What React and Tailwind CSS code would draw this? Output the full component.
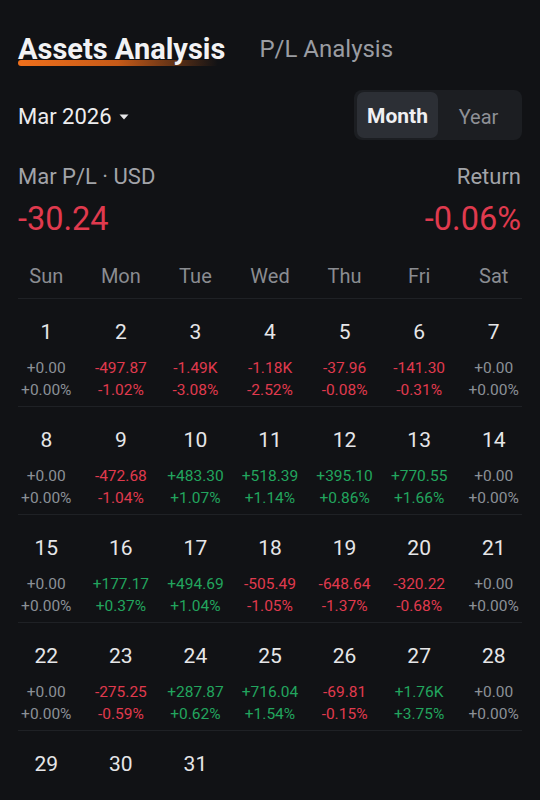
import React from "react";

const RED = "text-[#e03a4e]";
const GREEN = "text-[#22a55e]";
const FLAT = "text-[#8b9097]";

const days = [
  [null, null],
  ["-497.87", "-1.02%"],
  ["-1.49K", "-3.08%"],
  ["-1.18K", "-2.52%"],
  ["-37.96", "-0.08%"],
  ["-141.30", "-0.31%"],
  [null, null],
  [null, null],
  ["-472.68", "-1.04%"],
  ["+483.30", "+1.07%"],
  ["+518.39", "+1.14%"],
  ["+395.10", "+0.86%"],
  ["+770.55", "+1.66%"],
  [null, null],
  [null, null],
  ["+177.17", "+0.37%"],
  ["+494.69", "+1.04%"],
  ["-505.49", "-1.05%"],
  ["-648.64", "-1.37%"],
  ["-320.22", "-0.68%"],
  [null, null],
  [null, null],
  ["-275.25", "-0.59%"],
  ["+287.87", "+0.62%"],
  ["+716.04", "+1.54%"],
  ["-69.81", "-0.15%"],
  ["+1.76K", "+3.75%"],
  [null, null],
];

const weekdays = ["Sun", "Mon", "Tue", "Wed", "Thu", "Fri", "Sat"];

function DayCell({ day, pl, pct }) {
  const value = pl ?? "+0.00";
  const percent = pct ?? "+0.00%";
  const tone = pl == null ? FLAT : pl.startsWith("-") ? RED : GREEN;
  return (
    <div className="flex flex-col items-center">
      <div className="h-[24px] text-[21px] leading-[24px] text-[#e6e6e8]">{day}</div>
      <div className={`mt-[13px] text-[15.5px] leading-[22px] ${tone}`}>{value}</div>
      <div className={`text-[15.5px] leading-[22px] ${tone}`}>{percent}</div>
    </div>
  );
}

export default function App() {
  const rows = [];
  for (let r = 0; r < 4; r++) {
    rows.push(days.slice(r * 7, r * 7 + 7).map((d, i) => ({ day: r * 7 + i + 1, pl: d[0], pct: d[1] })));
  }

  return (
    <div
      className="w-[540px] h-[800px] overflow-hidden bg-[#111215] text-white"
      style={{ fontFamily: "Roboto, 'Noto Sans', sans-serif" }}
    >
      {/* Tabs */}
      <div className="flex h-[34px] items-end gap-[34px] px-[18px] mt-[32px]">
        <div className="relative">
          <div className="relative z-10 text-[29px] font-bold leading-[34px] text-[#f2f2f4]">
            Assets Analysis
          </div>
          <div className="absolute left-0 top-[28px] h-[6px] w-[200px] rounded-full bg-gradient-to-r from-[#f0701c] via-[#c65a18] to-transparent" />
        </div>
        <div className="text-[24px] leading-[34px] text-[#9a9ca2]">P/L Analysis</div>
      </div>

      {/* Period selector */}
      <div className="mt-[24px] flex h-[50px] items-center justify-between pl-[18px] pr-[18px]">
        <div className="mt-[3px] flex items-center gap-[7px]">
          <span className="text-[22px] leading-[28px] text-[#ededef]">Mar 2026</span>
          <svg width="10" height="6" viewBox="0 0 10 6" className="mt-[1px]">
            <path d="M0.5 0.5 L9.5 0.5 L5 5.5 Z" fill="#e6e6e8" />
          </svg>
        </div>
        <div className="flex h-[50px] items-center rounded-[8px] bg-[#1c1e22] px-[3px]">
          <div className="flex h-[46px] w-[81px] items-center justify-center rounded-[7px] bg-[#2c2f35] pt-[3px] text-[21px] font-bold text-[#f0f0f2]">
            Month
          </div>
          <div className="flex h-[46px] w-[81px] items-center justify-center pt-[3px] text-[20px] text-[#8e9096]">
            Year
          </div>
        </div>
      </div>

      {/* Summary */}
      <div className="mt-[23px] flex justify-between px-[18px] pr-[19px]">
        <div>
          <div className="text-[22px] leading-[28px] text-[#a2a4a9]">Mar P/L · USD</div>
          <div className="mt-[8px] text-[32.5px] leading-[40px] text-[#e03a4e]">-30.24</div>
        </div>
        <div className="text-right">
          <div className="text-[22px] leading-[28px] text-[#a2a4a9]">Return</div>
          <div className="mt-[8px] text-[32.5px] leading-[40px] text-[#e03a4e]">-0.06%</div>
        </div>
      </div>

      {/* Weekday header */}
      <div className="mx-[18px] mt-[25px] border-b border-[#1f2125]">
        <div className="-mx-[9px] grid grid-cols-7 pb-[10px]">
          {weekdays.map((w) => (
            <div key={w} className="text-center text-[20px] leading-[24px] text-[#8a8c91]">
              {w}
            </div>
          ))}
        </div>
      </div>

      {/* Calendar rows */}
      {rows.map((row, ri) => (
        <div key={ri} className="mx-[18px] border-b border-[#1f2125]">
          <div className="-mx-[9px] grid grid-cols-7 pt-[21px] pb-[5px]">
            {row.map((c) => (
              <DayCell key={c.day} day={c.day} pl={c.pl} pct={c.pct} />
            ))}
          </div>
        </div>
      ))}
      <div className="mx-[18px]">
        <div className="-mx-[9px] grid grid-cols-7 pt-[21px]">
          {[29, 30, 31].map((d) => (
            <div key={d} className="text-center text-[21px] leading-[24px] text-[#e6e6e8]">
              {d}
            </div>
          ))}
        </div>
      </div>
    </div>
  );
}
